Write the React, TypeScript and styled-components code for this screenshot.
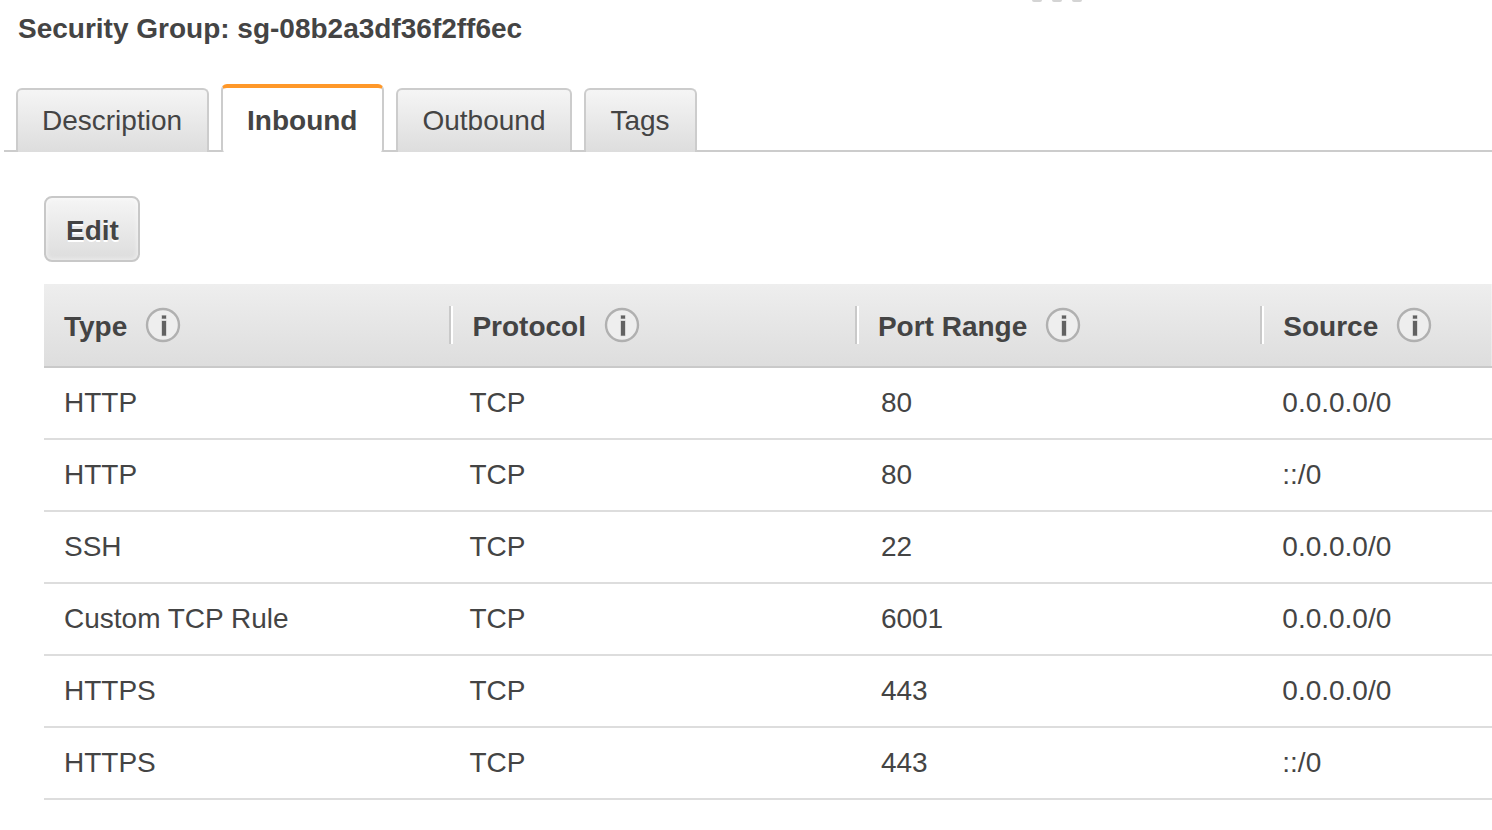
import React, { useState } from "react";
import styled, { createGlobalStyle, css } from "styled-components";

const GlobalStyle = createGlobalStyle`
  *, *::before, *::after { box-sizing: border-box; }
  body {
    margin: 0;
    background: #fff;
    color: #444;
    font-family: "Helvetica Neue", "Liberation Sans", Arial, sans-serif;
    font-size: 28px;
    line-height: 32px;
  }
`;

const Page = styled.main`
  display: flex;
  flex-direction: column;
  overflow-x: hidden;
`;

const ResizeHandle = styled.div`
  display: flex;
  justify-content: flex-end;
  gap: 10px;
  height: 13px;
  padding-right: 410px;
`;

const HandleDot = styled.span`
  width: 10px;
  height: 2px;
  border-radius: 0 0 4px 4px;
  background: #d4d4d4;
`;

const Title = styled.h1`
  margin: 0;
  padding: 0 18px;
  font-size: 28px;
  line-height: 32px;
  font-weight: bold;
`;

const TabList = styled.div`
  display: flex;
  align-items: flex-end;
  gap: 12px;
  margin: 39px 0 0 4px;
  padding-left: 12px;
  box-shadow: inset 0 -2px #ccc;
`;

const Tab = styled.button<{ $active: boolean }>`
  height: 64px;
  padding: 0 25px 0 24px;
  border: 2px solid #ccc;
  border-bottom: 0;
  border-radius: 6px 6px 0 0;
  background: linear-gradient(#f5f5f5, #ddd);
  color: inherit;
  font: inherit;
  cursor: pointer;

  ${({ $active }) =>
    $active &&
    css`
      height: 68px;
      padding-top: 2px;
      border-top: 4px solid #ff9829;
      border-radius: 6px 6px 3px 3px;
      background: #fff;
      font-weight: bold;
    `}
`;

const Panel = styled.section`
  display: flex;
  flex-direction: column;
  align-items: flex-start;
  gap: 22px;
  padding: 44px 0 24px 44px;
`;

const EditButton = styled.button`
  height: 66px;
  padding: 3px 19px 0 20px;
  border: 2px solid #c8c8c8;
  border-radius: 8px;
  background: linear-gradient(#f5f5f5, #ddd);
  box-shadow: inset 0 0 4px 1px rgba(255, 255, 255, 0.5);
  color: inherit;
  font: inherit;
  font-weight: bold;
  text-shadow: 0 2px #fff;
  cursor: pointer;
`;

const RulesTable = styled.table`
  width: 100%;
  table-layout: fixed;
  border-collapse: separate;
  border-spacing: 0;
`;

const HeadRow = styled.tr`
  background: linear-gradient(#eee, #ddd);
`;

const HeadCell = styled.th`
  width: 28%;
  height: 84px;
  padding: 0;
  border-bottom: 2px solid #c9c9c9;
  text-align: left;

  &:last-child {
    width: 16%;
  }
`;

const HeadContent = styled.div<{ $divided: boolean }>`
  display: flex;
  align-items: center;
  gap: 18px;
  height: 38px;
  padding-left: 20px;
  white-space: nowrap;

  ${({ $divided }) =>
    $divided &&
    css`
      padding-left: 21px;
      border-left: 2px solid #c9c9c9;
      box-shadow: inset 2px 0 #fff;
    `}
`;

const HeadLabel = styled.span`
  padding-top: 3px;
`;

const InfoButton = styled.button`
  display: flex;
  padding: 0;
  border: 0;
  background: none;
  cursor: help;
`;

const Cell = styled.td<{ $indent?: number }>`
  height: 72px;
  padding: 0 0 0 ${({ $indent = 20 }) => $indent}px;
  border-bottom: 2px solid #ddd;
  white-space: nowrap;
`;

function InfoIcon() {
  return (
    <svg width="36" height="36" viewBox="0 0 36 36" aria-hidden="true">
      <circle cx="18" cy="18" r="16" fill="#eee" stroke="#b0b0b0" strokeWidth="2.4" />
      <g fill="#626262" stroke="#bdbdbd" strokeWidth="1" paintOrder="stroke">
        <rect x="17" y="8.6" width="4" height="3" />
        <rect x="17" y="14" width="4" height="14.6" />
      </g>
    </svg>
  );
}

const tabs = ["Description", "Inbound", "Outbound", "Tags"];
const columns = ["Type", "Protocol", "Port Range", "Source"];
const rules = [
  { type: "HTTP", protocol: "TCP", port: "80", source: "0.0.0.0/0" },
  { type: "HTTP", protocol: "TCP", port: "80", source: "::/0" },
  { type: "SSH", protocol: "TCP", port: "22", source: "0.0.0.0/0" },
  { type: "Custom TCP Rule", protocol: "TCP", port: "6001", source: "0.0.0.0/0" },
  { type: "HTTPS", protocol: "TCP", port: "443", source: "0.0.0.0/0" },
  { type: "HTTPS", protocol: "TCP", port: "443", source: "::/0" },
];

export default function App() {
  const [active, setActive] = useState("Inbound");

  return (
    <Page>
      <GlobalStyle />
      <ResizeHandle aria-hidden="true">
        <HandleDot />
        <HandleDot />
        <HandleDot />
      </ResizeHandle>
      <Title>Security Group: sg-08b2a3df36f2ff6ec</Title>
      <TabList role="tablist">
        {tabs.map((tab) => (
          <Tab
            key={tab}
            type="button"
            role="tab"
            aria-selected={tab === active}
            $active={tab === active}
            onClick={() => setActive(tab)}
          >
            {tab}
          </Tab>
        ))}
      </TabList>
      <Panel role="tabpanel" aria-label={active}>
        <EditButton type="button">Edit</EditButton>
        <RulesTable>
          <thead>
            <HeadRow>
              {columns.map((column, index) => (
                <HeadCell key={column} scope="col">
                  <HeadContent $divided={index > 0}>
                    <HeadLabel>{column}</HeadLabel>
                    <InfoButton type="button" aria-label={`About ${column}`}>
                      <InfoIcon />
                    </InfoButton>
                  </HeadContent>
                </HeadCell>
              ))}
            </HeadRow>
          </thead>
          <tbody>
            {rules.map((rule, index) => (
              <tr key={index}>
                <Cell>{rule.type}</Cell>
                <Cell>{rule.protocol}</Cell>
                <Cell $indent={26}>{rule.port}</Cell>
                <Cell $indent={22}>{rule.source}</Cell>
              </tr>
            ))}
          </tbody>
        </RulesTable>
      </Panel>
    </Page>
  );
}
